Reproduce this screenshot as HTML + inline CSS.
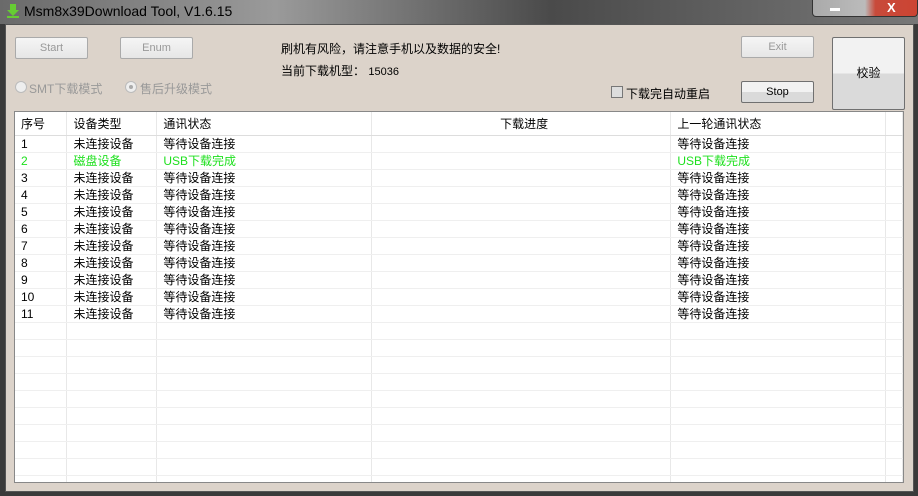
<!DOCTYPE html><html><head><meta charset="utf-8"><style>
body{margin:0;width:918px;height:496px;overflow:hidden;background:#3a3a3a;font-family:"Liberation Sans","Noto Sans CJK SC",sans-serif;font-size:12px;position:relative}
.abs{position:absolute}
.title{left:0;top:0;width:918px;height:24px;background:linear-gradient(90deg,#6a6a6a,#9a9a9a 30%,#4a4a4a 60%,#777 100%)}
.client{left:5px;top:24px;width:907px;height:466px;background:#dcd3ca;border:1px solid #555;}
.btn{position:absolute;border:1px solid #aaa;border-radius:2px;background:linear-gradient(#f5f5f5,#e6e6e6);color:#999;text-align:center;font-size:11px}
.btn.en{border-color:#707070;color:#000;background:linear-gradient(#f2f2f2 50%,#dadada 50%)}
table{border-collapse:collapse;table-layout:fixed}
td{height:16px;border-bottom:1px solid #efefef;border-right:1px solid #e8e8e8;padding:0 0 0 6px;font-size:12px;line-height:16px;white-space:nowrap;overflow:hidden}
.g td{color:#1ee01e}
.h td{height:23px;border-bottom:1px solid #ddd}
</style></head><body>
<div class="abs title"></div>
<svg class="abs" style="left:5px;top:3px" width="16" height="16"><path d="M5 1h6v6h3l-6 6-6-6h3z" fill="#6c3"/><rect x="2" y="13" width="12" height="2" fill="#6c3"/></svg>
<div class="abs" style="left:24px;top:3px;font-size:14px;color:#000">Msm8x39Download Tool, V1.6.15</div>
<div class="abs" style="left:812px;top:0;width:104px;height:16px;border:1px solid #333;border-top:0;border-radius:0 0 4px 4px;background:linear-gradient(90deg,#aaa 0,#bbb 50%,#c84a3a 60%,#c43)"></div>
<div class="abs" style="left:830px;top:8px;width:10px;height:3px;background:#fff"></div>
<div class="abs" style="left:887px;top:0;color:#fff;font-weight:bold;font-size:13px">X</div>
<div class="abs client"></div>
<div class="btn" style="left:15px;top:37px;width:71px;height:20px;line-height:20px">Start</div>
<div class="btn" style="left:120px;top:37px;width:71px;height:20px;line-height:20px">Enum</div>
<div class="btn" style="left:741px;top:36px;width:71px;height:20px;line-height:20px">Exit</div>
<div class="btn en" style="left:741px;top:81px;width:71px;height:20px;line-height:20px">Stop</div>
<div class="btn en" style="left:832px;top:37px;width:71px;height:71px;line-height:71px;font-size:12px">校验</div>
<div class="abs" style="left:281px;top:40px">刷机有风险，请注意手机以及数据的安全!</div>
<div class="abs" style="left:281px;top:62px">当前下载机型： <span style="font-size:11px">15036</span></div>
<div class="abs" style="left:15px;top:81px;width:10px;height:10px;border:1px solid #bbb;border-radius:50%;background:#eee"></div>
<div class="abs" style="left:29px;top:80px;color:#999">SMT下载模式</div>
<div class="abs" style="left:125px;top:81px;width:10px;height:10px;border:1px solid #bbb;border-radius:50%;background:#eee"></div>
<div class="abs" style="left:129px;top:85px;width:4px;height:4px;border-radius:50%;background:#aaa"></div>
<div class="abs" style="left:140px;top:80px;color:#999">售后升级模式</div>
<div class="abs" style="left:611px;top:86px;width:10px;height:10px;border:1px solid #777;background:#ddd"></div>
<div class="abs" style="left:626px;top:85px">下载完自动重启</div>
<div class="abs" style="left:14px;top:111px;width:888px;height:370px;background:#fff;border:1px solid #888;overflow:hidden">
<table>
<colgroup><col width="52"><col width="90"><col width="215"><col width="300"><col width="215"><col width="17"></colgroup>
<tr class="h"><td>序号</td><td>设备类型</td><td>通讯状态</td><td style="text-align:center">下载进度</td><td>上一轮通讯状态</td><td></td></tr>
<tr><td>1</td><td>未连接设备</td><td>等待设备连接</td><td></td><td>等待设备连接</td><td></td></tr>
<tr class="g"><td>2</td><td>磁盘设备</td><td>USB下载完成</td><td></td><td>USB下载完成</td><td></td></tr>
<tr><td>3</td><td>未连接设备</td><td>等待设备连接</td><td></td><td>等待设备连接</td><td></td></tr>
<tr><td>4</td><td>未连接设备</td><td>等待设备连接</td><td></td><td>等待设备连接</td><td></td></tr>
<tr><td>5</td><td>未连接设备</td><td>等待设备连接</td><td></td><td>等待设备连接</td><td></td></tr>
<tr><td>6</td><td>未连接设备</td><td>等待设备连接</td><td></td><td>等待设备连接</td><td></td></tr>
<tr><td>7</td><td>未连接设备</td><td>等待设备连接</td><td></td><td>等待设备连接</td><td></td></tr>
<tr><td>8</td><td>未连接设备</td><td>等待设备连接</td><td></td><td>等待设备连接</td><td></td></tr>
<tr><td>9</td><td>未连接设备</td><td>等待设备连接</td><td></td><td>等待设备连接</td><td></td></tr>
<tr><td>10</td><td>未连接设备</td><td>等待设备连接</td><td></td><td>等待设备连接</td><td></td></tr>
<tr><td>11</td><td>未连接设备</td><td>等待设备连接</td><td></td><td>等待设备连接</td><td></td></tr>
<tr><td></td><td></td><td></td><td></td><td></td><td></td></tr>
<tr><td></td><td></td><td></td><td></td><td></td><td></td></tr>
<tr><td></td><td></td><td></td><td></td><td></td><td></td></tr>
<tr><td></td><td></td><td></td><td></td><td></td><td></td></tr>
<tr><td></td><td></td><td></td><td></td><td></td><td></td></tr>
<tr><td></td><td></td><td></td><td></td><td></td><td></td></tr>
<tr><td></td><td></td><td></td><td></td><td></td><td></td></tr>
<tr><td></td><td></td><td></td><td></td><td></td><td></td></tr>
<tr><td></td><td></td><td></td><td></td><td></td><td></td></tr>
<tr><td></td><td></td><td></td><td></td><td></td><td></td></tr>
</table></div>
</body></html>
